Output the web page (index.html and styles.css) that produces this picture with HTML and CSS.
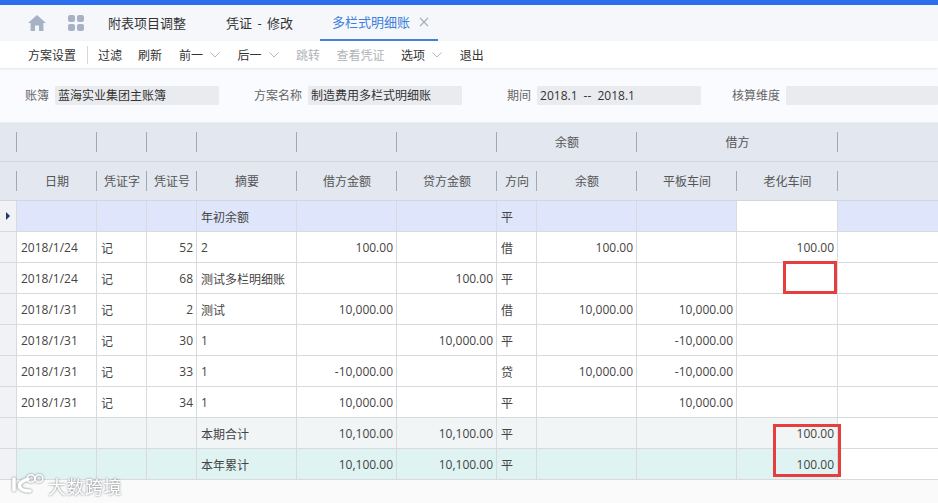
FILE: index.html
```html
<!DOCTYPE html>
<html lang="zh-CN">
<head>
<meta charset="utf-8">
<title>多栏式明细账</title>
<link rel="stylesheet" href="styles.css">
</head>
<body>
<div class="page">
  <div class="topbar"></div>
  <nav class="tabs">
    <svg class="home" viewBox="0 0 18 16" width="18" height="16"><path d="M9 0 L18 8 H15.4 V16 H11 V10.5 H7 V16 H2.6 V8 H0 Z" fill="#a8b2c6"/></svg>
    <svg class="apps" viewBox="0 0 16 16" width="16" height="16"><g fill="#a8b2c6"><rect x="0" y="0" width="7" height="7" rx="2"/><rect x="9" y="0" width="7" height="7" rx="2"/><rect x="0" y="9" width="7" height="7" rx="2"/><rect x="9" y="9" width="7" height="7" rx="2"/></g></svg>
    <span class="tab t1">附表项目调整</span>
    <span class="tab t2">凭证 - 修改</span>
    <span class="tab active">多栏式明细账<svg class="close" viewBox="0 0 10 10" width="10" height="10"><path d="M1 1 L9 9 M9 1 L1 9" stroke="#a9afbb" stroke-width="1.2" fill="none"/></svg></span>
  </nav>
  <div class="toolbar">
    <span class="tool first">方案设置</span>
    <span class="sep"></span>
    <span class="tool">过滤</span>
    <span class="tool refresh">刷新</span>
    <span class="tool drop">前一<svg class="chev" viewBox="0 0 10 6" width="10" height="6"><path d="M0.5 0.5 L5 5 L9.5 0.5" stroke="#b4b9c2" fill="none"/></svg></span>
    <span class="tool drop">后一<svg class="chev" viewBox="0 0 10 6" width="10" height="6"><path d="M0.5 0.5 L5 5 L9.5 0.5" stroke="#b4b9c2" fill="none"/></svg></span>
    <span class="tool off">跳转</span>
    <span class="tool off">查看凭证</span>
    <span class="tool drop">选项<svg class="chev" viewBox="0 0 10 6" width="10" height="6"><path d="M0.5 0.5 L5 5 L9.5 0.5" stroke="#b4b9c2" fill="none"/></svg></span>
    <span class="tool">退出</span>
  </div>
  <div class="filters">
    <label class="fld f1">账簿<span class="val">蓝海实业集团主账簿</span></label>
    <label class="fld f2">方案名称<span class="val">制造费用多栏式明细账</span></label>
    <label class="fld f3">期间<span class="val">2018.1 -- 2018.1</span></label>
    <label class="fld f4">核算维度<span class="val"></span></label>
  </div>
  <div class="grid-wrap">
    <table class="grid">
      <colgroup>
        <col class="c0"><col class="c80"><col class="c50"><col class="c50"><col class="c100"><col class="c100"><col class="c100"><col class="c40"><col class="c100"><col class="c100"><col class="c101"><col>
      </colgroup>
      <thead>
        <tr><th class="ind"></th><th></th><th></th><th></th><th></th><th></th><th></th><th colspan="2">余额</th><th colspan="2">借方</th><th class="rest"></th></tr>
        <tr><th class="ind"></th><th>日期</th><th>凭证字</th><th>凭证号</th><th>摘要</th><th>借方金额</th><th>贷方金额</th><th>方向</th><th>余额</th><th>平板车间</th><th>老化车间</th><th class="rest"></th></tr>
      </thead>
      <tbody>
        <tr class="sel"><td class="ind"><svg class="arrow" viewBox="0 0 4 8" width="4" height="8"><path d="M0 0 L4 4 L0 8 Z" fill="#1f3a66"/></svg></td><td></td><td></td><td></td><td>年初余额</td><td></td><td></td><td>平</td><td></td><td></td><td class="white"></td><td></td></tr>
        <tr><td class="ind"></td><td>2018/1/24</td><td>记</td><td class="n">52</td><td>2</td><td class="n">100.00</td><td></td><td>借</td><td class="n">100.00</td><td></td><td class="n">100.00</td><td></td></tr>
        <tr><td class="ind"></td><td>2018/1/24</td><td>记</td><td class="n">68</td><td>测试多栏明细账</td><td></td><td class="n">100.00</td><td>平</td><td></td><td></td><td></td><td></td></tr>
        <tr><td class="ind"></td><td>2018/1/31</td><td>记</td><td class="n">2</td><td>测试</td><td class="n">10,000.00</td><td></td><td>借</td><td class="n">10,000.00</td><td class="n">10,000.00</td><td></td><td></td></tr>
        <tr><td class="ind"></td><td>2018/1/31</td><td>记</td><td class="n">30</td><td>1</td><td></td><td class="n">10,000.00</td><td>平</td><td></td><td class="n">-10,000.00</td><td></td><td></td></tr>
        <tr><td class="ind"></td><td>2018/1/31</td><td>记</td><td class="n">33</td><td>1</td><td class="n">-10,000.00</td><td></td><td>贷</td><td class="n">10,000.00</td><td class="n">-10,000.00</td><td></td><td></td></tr>
        <tr><td class="ind"></td><td>2018/1/31</td><td>记</td><td class="n">34</td><td>1</td><td class="n">10,000.00</td><td></td><td>平</td><td></td><td class="n">10,000.00</td><td></td><td></td></tr>
        <tr class="sum"><td class="ind"></td><td></td><td></td><td></td><td>本期合计</td><td class="n">10,100.00</td><td class="n">10,100.00</td><td>平</td><td></td><td></td><td class="n">100.00</td><td class="white"></td></tr>
        <tr class="cum"><td class="ind"></td><td></td><td></td><td></td><td>本年累计</td><td class="n">10,100.00</td><td class="n">10,100.00</td><td>平</td><td></td><td></td><td class="n">100.00</td><td class="white"></td></tr>
      </tbody>
    </table>
    <div class="mark m1"></div>
    <div class="mark m2"></div>
  </div>
  <div class="footer"></div>
  <div class="watermark">
    <svg viewBox="0 0 34 20" width="34" height="20"><g fill="none" stroke="#fff" stroke-linecap="round"><path d="M4 6 V17" stroke-width="3.6"/><path d="M18 6 C12 8 9.500 10 9.500 12.500 C9.500 16 14 18 20 18" stroke-width="3.6"/><circle cx="21" cy="5.500" r="3.800" stroke-width="1.500"/><circle cx="29" cy="5.500" r="3.800" stroke-width="1.500"/></g></svg>
    <span class="wm-text">大数跨境</span>
  </div>
</div>
</body>
</html>
```
FILE: styles.css
```css
* { box-sizing: border-box; }
html, body { margin: 0; padding: 0; }
body { background: #fafafa; font-family: "Open Sans", "Noto Sans CJK SC", "Liberation Sans", sans-serif; font-size: 12px; color: #333; overflow: hidden; }
.page { position: relative; width: 938px; height: 503px; overflow: hidden; display: flex; flex-direction: column; }
.topbar { height: 5px; background: #2b6fef; }
.tabs { height: 36px; background: #f5f7fb; display: flex; align-items: center; padding-left: 28px; font-size: 13px; }
.home { margin-right: 22px; }
.apps { margin-right: 24px; }
.tab { color: #333; line-height: 36px; height: 36px; white-space: nowrap; }
.t1 { margin-right: 40px; }
.t2 { width: 66px; margin-right: 28px; word-spacing: 2px; }
.tab.active { color: #3d7fdc; width: 118px; padding-left: 12px; border-bottom: 2px solid #4780d8; display: flex; align-items: center; line-height: 34px; }
.close { margin-left: 9px; }
.toolbar { height: 27px; background: #fff; display: flex; align-items: center; padding-left: 28px; box-shadow: 0 1px 2px rgba(60,70,90,.12); position: relative; }
.tool { margin-right: 16px; color: #333; white-space: nowrap; display: flex; align-items: center; }
.tool.first { margin-right: 11px; }
.tool.refresh { margin-right: 17px; }
.tool.drop { margin-right: 17.5px; }
.tool.off { color: #b0b3b8; margin-right: 16.5px; }
.sep { width: 1px; height: 18px; background: #d5d8de; margin-right: 10px; }
.chev { margin-left: 7px; }
.filters { height: 55px; background: #fafbfe; display: flex; align-items: center; color: #666; border-bottom: 1px solid #eceef2; }
.fld { display: flex; align-items: center; white-space: nowrap; }
.val { display: block; height: 19px; line-height: 19px; background: #e9ebef; color: #333; padding-left: 3px; margin-left: 6px; border-radius: 1px; word-spacing: 3px; }
.f1 { margin-left: 25px; margin-right: 35px; }
.f1 .val { width: 164px; }
.f2 { margin-right: 45px; }
.f2 .val { width: 154px; }
.f3 { margin-right: 31px; }
.f3 .val { width: 164px; }
.f4 .val { width: 152px; }
.grid-wrap { position: relative; }
.grid { width: 938px; table-layout: fixed; border-collapse: separate; border-spacing: 0; }
.c0 { width: 17px; } .c40 { width: 40px; } .c50 { width: 50px; } .c80 { width: 80px; } .c100 { width: 100px; } .c101 { width: 101px; }
th { height: 39px; padding: 0; font-weight: 400; color: #555; background: #e2e7f0 linear-gradient(#a3a9b3, #a3a9b3) right center / 1px 20px no-repeat; border-bottom: 1px solid #d0d5de; text-align: center; }
th.rest { background: #e2e7f0; }
td { height: 31px; padding: 1px 3px 0 4px; border-right: 1px solid #d8dade; border-bottom: 1px solid #d8dade; color: #444; white-space: nowrap; overflow: hidden; background: #fff; }
td:last-child { border-right: 0; }
td.n { text-align: right; }
td.ind { background: #f1f2f6; padding: 0 0 0 6px; }
.arrow { display: block; }
.sel td { background: #dfe6fb; }
.sel td.ind { background: #f1f2f6; }
.sel td.white { background: #fff; }
.sum td { background: #f1f5f6; }
.cum td { background: #dff4f2; }
.sum td.ind, .cum td.ind { background: #f1f2f6; }
.sum td.white, .cum td.white { background: #fff; }
.mark { position: absolute; border: 3px solid #e63d3f; }
.m1 { left: 783px; top: 138px; width: 54px; height: 33px; }
.m2 { left: 773px; top: 301px; width: 68px; height: 53px; }
.footer { flex: 1; background: #fafafa; }
.watermark { position: absolute; left: 10px; top: 473px; display: flex; align-items: flex-start; gap: 4px; filter: drop-shadow(0 0 1px #70767a); }
.wm-text { font-size: 18px; line-height: 22px; margin-top: 3px; font-weight: 400; color: #fff; letter-spacing: 0.5px; }
```
